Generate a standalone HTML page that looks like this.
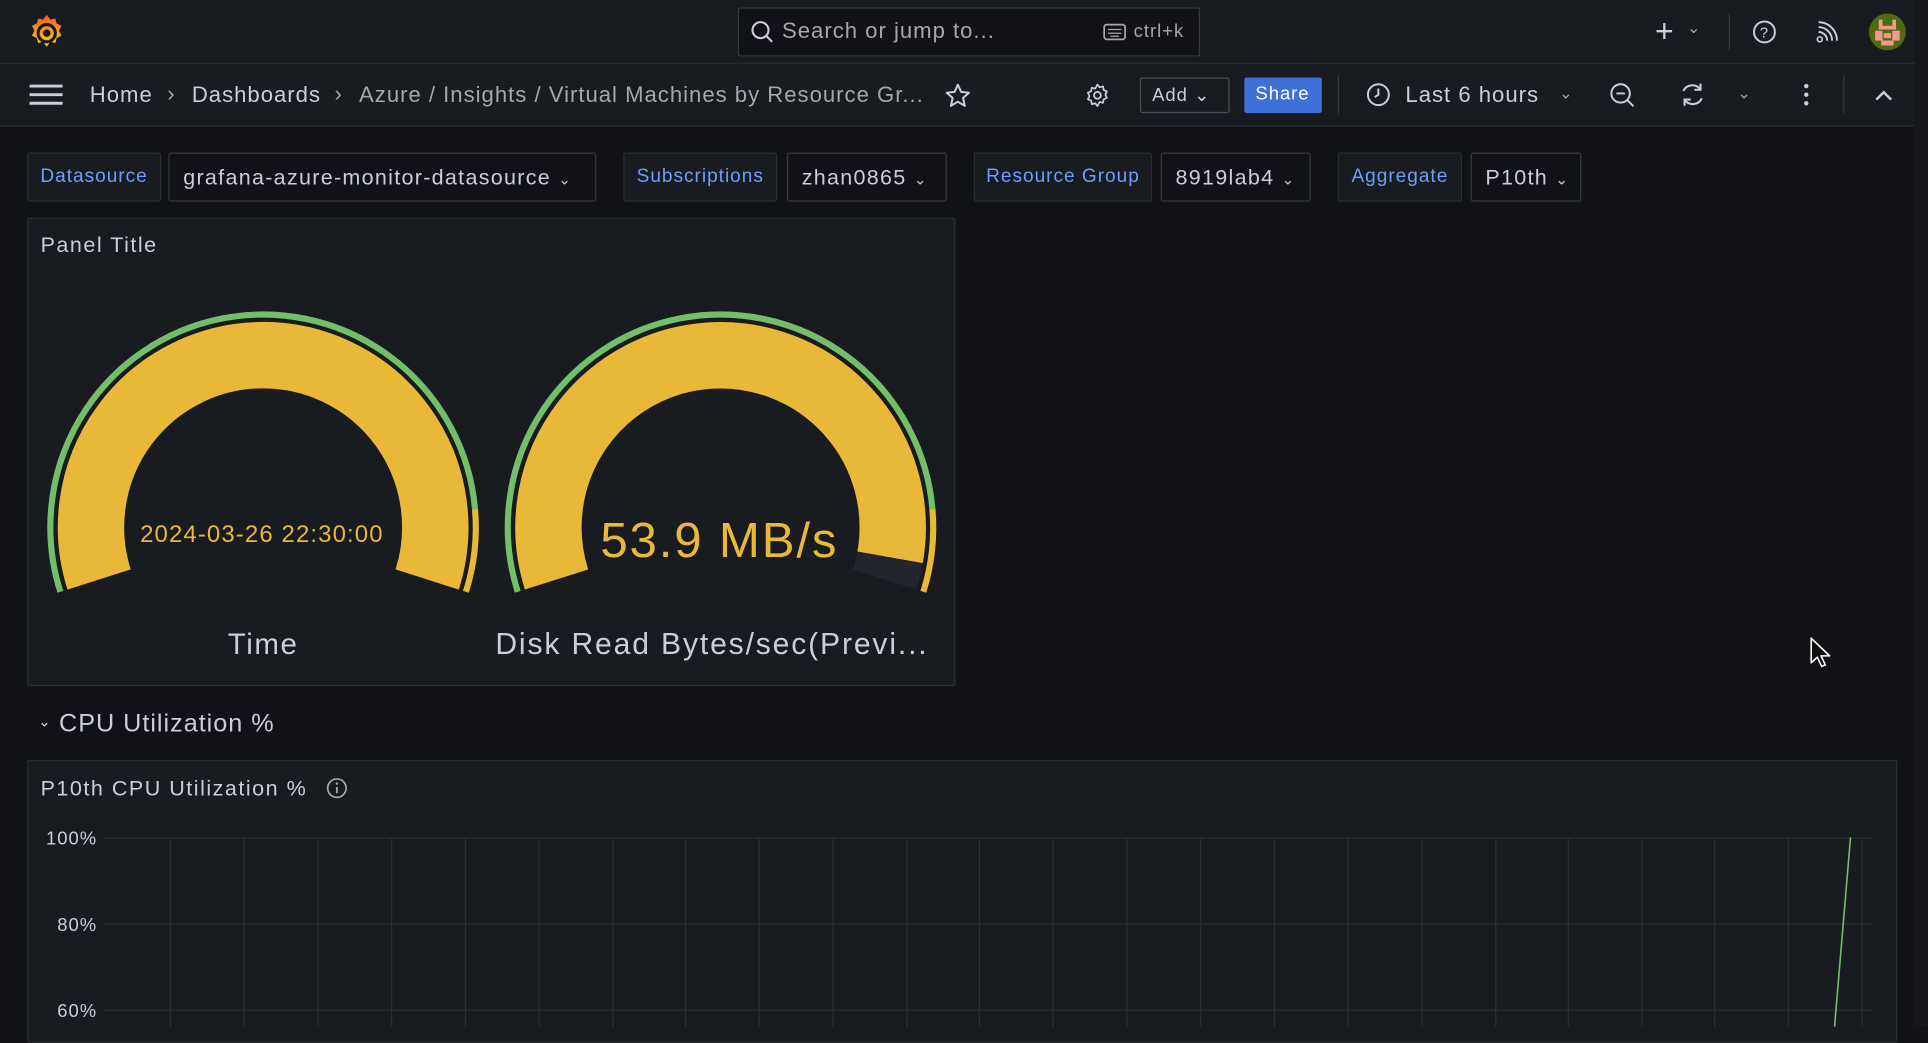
<!DOCTYPE html>
<html><head><meta charset="utf-8">
<style>
html,body{margin:0;padding:0;background:#111217;overflow:hidden;width:1928px;height:1026px}
#w{position:absolute;left:0;top:0;width:1568px;height:835px;transform:scale(1.22959);transform-origin:0 0;font-family:"Liberation Sans",sans-serif;color:#ccccdc;background:#111217;letter-spacing:0.05em}
.a{position:absolute}
.bar{position:absolute;left:0;width:1557px;background:#181b1f;border-bottom:1px solid #2a2d33}
.t{position:absolute;white-space:nowrap}
.lbl{position:absolute;top:124px;height:40px;background:#181b1f;border:1px solid #2a2d33;box-sizing:border-box;color:#6e9fff;font-size:15.5px;line-height:38px;text-align:center;border-radius:2px}
.sel{position:absolute;top:124px;height:40px;background:#111217;border:1px solid #34373d;box-sizing:border-box;color:#ccccdc;font-size:17.5px;line-height:38px;padding-left:11px;border-radius:2px;letter-spacing:0.06em}
.panel{position:absolute;background:#181b1f;border:1px solid #2a2d33;box-sizing:border-box;border-radius:2px}
</style></head><body><div id="w">
<div class="a" style="left:1557px;top:0;width:11px;height:835px;background:#16171c"></div>
<!-- top bar -->
<div class="bar" style="top:0;height:51px"></div>
<svg class="a" style="left:23px;top:10px" width="30" height="32" viewBox="0 0 30 32">
<defs><linearGradient id="g" x1="0" y1="1" x2="0" y2="0"><stop offset="0" stop-color="#fcd21c"/><stop offset="1" stop-color="#f05a28"/></linearGradient></defs>
<path d="M15 2l3 4 4-1 1 4 4 2-2 4 2 4-4 2-1 4-4-1-3 4-3-4-4 1-1-4-4-2 2-4-2-4 4-2 1-4 4 1z" fill="url(#g)"/>
<circle cx="15" cy="17" r="7" fill="none" stroke="#181b1f" stroke-width="2.5"/><circle cx="15" cy="17" r="3" fill="#181b1f"/>
</svg>
<div class="a" style="left:600px;top:6px;width:376px;height:40px;border:1px solid #34373d;box-sizing:border-box;background:#111217;border-radius:2px"></div>
<svg class="a" style="left:610px;top:16px" width="20" height="20" viewBox="0 0 20 20"><circle cx="8.5" cy="8.5" r="6.5" fill="none" stroke="#ccccdc" stroke-width="1.7"/><path d="M13 13l5 5" stroke="#ccccdc" stroke-width="1.7"/></svg>
<div class="t" style="left:636px;top:15px;font-size:18px;color:#a6a7ae">Search or jump to...</div>
<svg class="a" style="left:897px;top:19px" width="19" height="14"><rect x="1" y="1" width="17" height="12" rx="2" fill="none" stroke="#a6a7ae" stroke-width="1.4"/><path d="M4 5h11M4 8h11M6 10.5h7" stroke="#a6a7ae" stroke-width="1"/></svg>
<div class="t" style="left:922px;top:17px;font-size:15px;color:#a6a7ae">ctrl+k</div>
<div class="t" style="left:1346px;top:10px;font-size:26px;color:#ccccdc">+</div>
<div class="t" style="left:1372px;top:15px;font-size:13px;color:#a6a7ae">⌄</div>
<div class="a" style="left:1406px;top:11px;width:1px;height:30px;background:#34373d"></div>
<svg class="a" style="left:1425px;top:16px" width="20" height="20"><circle cx="10" cy="10" r="8.5" fill="none" stroke="#ccccdc" stroke-width="1.6"/><text x="10" y="14.5" font-size="12" fill="#ccccdc" text-anchor="middle" font-family="Liberation Sans">?</text></svg>
<svg class="a" style="left:1477px;top:17px" width="18" height="18"><circle cx="3" cy="15" r="2" fill="none" stroke="#ccccdc" stroke-width="1.3"/><path d="M2 9a7 7 0 0 1 7 7M2 5a11 11 0 0 1 11 11M2 1a15 15 0 0 1 15 15" fill="none" stroke="#ccccdc" stroke-width="1.6"/></svg>
<svg class="a" style="left:1520px;top:11px" width="30" height="30" viewBox="0 0 30 30"><circle cx="15" cy="15" r="15" fill="#4d6b12"/><rect x="8" y="5" width="3" height="8" fill="#f59a8a"/><rect x="19" y="5" width="3" height="8" fill="#f59a8a"/><rect x="8" y="10" width="14" height="3" fill="#f59a8a"/><rect x="5" y="14" width="6" height="8" fill="#f59a8a"/><rect x="19" y="14" width="6" height="8" fill="#f59a8a"/><rect x="12" y="16" width="6" height="4" fill="#f59a8a"/><rect x="10" y="22" width="10" height="4" fill="#f59a8a"/></svg>
<!-- second bar -->
<div class="bar" style="top:52px;height:50px"></div>
<svg class="a" style="left:24px;top:68px" width="27" height="18"><path d="M0 2h27M0 9h27M0 16h27" stroke="#ccccdc" stroke-width="2.4"/></svg>
<div class="t" style="left:73px;top:67px;font-size:18px;color:#ccccdc">Home</div>
<div class="t" style="left:136px;top:66px;font-size:18px;color:#a6a7ae">›</div>
<div class="t" style="left:156px;top:67px;font-size:18px;color:#ccccdc">Dashboards</div>
<div class="t" style="left:272px;top:66px;font-size:18px;color:#a6a7ae">›</div>
<div class="t" style="left:292px;top:67px;font-size:18px;color:#a6a7ae">Azure / Insights / Virtual Machines by Resource Gr...</div>
<svg class="a" style="left:768px;top:67px" width="22" height="21" viewBox="0 0 24 23"><path d="M12 2l2.9 6.5 7 .7-5.3 4.7 1.6 7-6.2-3.7-6.2 3.7 1.6-7L2.1 9.2l7-.7z" fill="none" stroke="#ccccdc" stroke-width="1.8" stroke-linejoin="round"/></svg>
<svg class="a" style="left:882px;top:67px" width="21" height="21" viewBox="0 0 24 24"><circle cx="12" cy="12" r="3.2" fill="none" stroke="#ccccdc" stroke-width="1.7"/><path d="M12 2l2 2.6 3.2-.8.6 3.2 3 1.4-1.4 3 1.4 3-3 1.4-.6 3.2-3.2-.8L12 22l-2-2.6-3.2.8-.6-3.2-3-1.4 1.4-3-1.4-3 3-1.4.6-3.2 3.2.8z" fill="none" stroke="#ccccdc" stroke-width="1.6" stroke-linejoin="round"/></svg>
<div class="a" style="left:927px;top:63px;width:73px;height:29px;border:1px solid #4a4d54;box-sizing:border-box;border-radius:2px"></div>
<div class="t" style="left:937px;top:68px;font-size:15px;color:#ccccdc">Add ⌄</div>
<div class="a" style="left:1012px;top:63px;width:63px;height:29px;background:#3d71d9;border-radius:2px"></div>
<div class="t" style="left:1021px;top:68px;font-size:15px;color:#fff">Share</div>
<div class="a" style="left:1088px;top:61px;width:1px;height:32px;background:#34373d"></div>
<svg class="a" style="left:1111px;top:67px" width="20" height="20"><circle cx="10" cy="10" r="8.5" fill="none" stroke="#ccccdc" stroke-width="1.6"/><path d="M10 5v5l-3 2" fill="none" stroke="#ccccdc" stroke-width="1.6"/></svg>
<div class="t" style="left:1143px;top:67px;font-size:18px;color:#ccccdc">Last 6 hours</div>
<div class="t" style="left:1268px;top:68px;font-size:13px;color:#a6a7ae">⌄</div>
<svg class="a" style="left:1309px;top:67px" width="21" height="21"><circle cx="9" cy="9" r="7.5" fill="none" stroke="#ccccdc" stroke-width="1.6"/><path d="M5.5 9h7M14.5 14.5l5 5" stroke="#ccccdc" stroke-width="1.6"/></svg>
<svg class="a" style="left:1366px;top:66px" width="21" height="22" viewBox="0 0 21 22"><path d="M17 7A8 8 0 0 0 3 8M4 15a8 8 0 0 0 14-1" fill="none" stroke="#ccccdc" stroke-width="1.7"/><path d="M17 2v5h-5M4 20v-5h5" fill="none" stroke="#ccccdc" stroke-width="1.7"/></svg>
<div class="t" style="left:1413px;top:68px;font-size:13px;color:#a6a7ae">⌄</div>
<svg class="a" style="left:1466px;top:67px" width="6" height="20"><circle cx="3" cy="3" r="1.8" fill="#ccccdc"/><circle cx="3" cy="10" r="1.8" fill="#ccccdc"/><circle cx="3" cy="17" r="1.8" fill="#ccccdc"/></svg>
<div class="a" style="left:1499px;top:61px;width:1px;height:32px;background:#34373d"></div>
<svg class="a" style="left:1525px;top:73px" width="14" height="9"><path d="M1 8l6-6 6 6" fill="none" stroke="#ccccdc" stroke-width="2"/></svg>
<!-- variables -->
<div class="lbl" style="left:22px;width:109px">Datasource</div>
<div class="sel" style="left:137px;width:348px">grafana-azure-monitor-datasource <span style="font-size:12px">⌄</span></div>
<div class="lbl" style="left:507px;width:125px">Subscriptions</div>
<div class="sel" style="left:640px;width:130px">zhan0865 <span style="font-size:12px">⌄</span></div>
<div class="lbl" style="left:792px;width:145px">Resource Group</div>
<div class="sel" style="left:944px;width:122px">8919lab4 <span style="font-size:12px">⌄</span></div>
<div class="lbl" style="left:1088px;width:101px">Aggregate</div>
<div class="sel" style="left:1196px;width:90px">P10th <span style="font-size:12px">⌄</span></div>
<!-- gauge panel -->
<div class="panel" style="left:22px;top:177px;width:755px;height:381px"></div>
<div class="t" style="left:33px;top:189px;font-size:17.5px;color:#ccccdc;letter-spacing:0.07em">Panel Title</div>
<svg class="a" style="left:0;top:0" width="800" height="560" viewBox="0 0 800 560">
<g fill="none" stroke-linecap="butt">
<path d="M49.1 481.3 A173 173 0 1 1 386.3 413.9" stroke="#73bf69" stroke-width="5"/>
<path d="M386.3 413.9 A173 173 0 0 1 378.9 481.3" stroke="#eab839" stroke-width="5"/>
<path d="M80.6 471.3 A140 140 0 1 1 347.4 471.3" stroke="#eab839" stroke-width="54"/>
<path d="M421.1 481.3 A173 173 0 1 1 758.3 413.9" stroke="#73bf69" stroke-width="5"/>
<path d="M758.3 413.9 A173 173 0 0 1 750.9 481.3" stroke="#eab839" stroke-width="5"/>
<path d="M452.6 471.3 A140 140 0 1 1 723.9 453.3" stroke="#eab839" stroke-width="54"/>
<path d="M723.9 453.3 A140 140 0 0 1 719.4 471.3" stroke="#22252b" stroke-width="54"/>
</g>
<text x="213" y="441" font-size="19.5" letter-spacing="0.9" fill="#eab839" text-anchor="middle" font-family="Liberation Sans">2024-03-26 22:30:00</text>
<text x="585" y="453" font-size="40" letter-spacing="1.5" fill="#eab839" text-anchor="middle" font-family="Liberation Sans">53.9 MB/s</text>
<text x="214" y="532" font-size="24" letter-spacing="1.3" fill="#ccccdc" text-anchor="middle" font-family="Liberation Sans">Time</text>
<text x="579" y="532" font-size="24.5" letter-spacing="1.5" fill="#ccccdc" text-anchor="middle" font-family="Liberation Sans">Disk Read Bytes/sec(Previ...</text>
</svg>
<!-- row -->
<div class="t" style="left:31px;top:580px;font-size:12px;color:#ccccdc">⌄</div>
<div class="t" style="left:48px;top:577px;font-size:20.5px;color:#ccccdc">CPU Utilization %</div>
<!-- time series panel -->
<div class="panel" style="left:22px;top:618px;width:1521px;height:230px"></div>
<div class="t" style="left:33px;top:631px;font-size:17.5px;color:#ccccdc;letter-spacing:0.07em">P10th CPU Utilization %</div>
<svg class="a" style="left:265px;top:632px" width="18" height="18"><circle cx="9" cy="9" r="7.5" fill="none" stroke="#a6a7ae" stroke-width="1.4"/><path d="M9 8v5" stroke="#a6a7ae" stroke-width="1.5"/><circle cx="9" cy="5.3" r="1" fill="#a6a7ae"/></svg>
<svg class="a" style="left:0;top:600px" width="1568" height="235" viewBox="0 600 1568 235">
<g stroke="#2c2f35" stroke-width="1">
<path d="M84 681.5H1522M84 751.5H1522M84 821.5H1522"/>
<path d="M138.5 681V835M198.5 681V835M258.5 681V835M318.5 681V835M378.5 681V835M438.5 681V835M498.5 681V835M557.5 681V835M617.5 681V835M677.5 681V835M737.5 681V835M796.5 681V835M856.5 681V835M916.5 681V835M976.5 681V835M1036.5 681V835M1096.5 681V835M1156.5 681V835M1216.5 681V835M1275.5 681V835M1335.5 681V835M1394.5 681V835M1454.5 681V835M1514.5 681V835"/>
</g>
<path d="M1505 681L1492 835" stroke="#73bf69" stroke-width="1.3" fill="none"/>
<g font-family="Liberation Sans" font-size="15" fill="#ccccdc" text-anchor="end">
<text x="79" y="687">100%</text><text x="79" y="757">80%</text><text x="79" y="827">60%</text>
</g>
</svg>
<!-- cursor -->
<svg class="a" style="left:1472px;top:518px" width="18" height="26" viewBox="0 0 18 26"><path d="M1 1v20l5-4.5 3.5 7.5 3-1.3-3.5-7.3H16z" fill="#111" stroke="#fff" stroke-width="1.3" stroke-linejoin="round"/></svg>
</div></body></html>
